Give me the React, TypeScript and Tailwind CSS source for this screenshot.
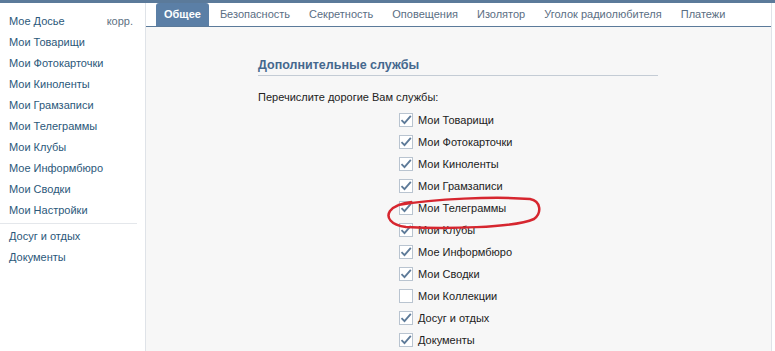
const menu = [
  "Мое Досье",
  "Мои Товарищи",
  "Мои Фотокарточки",
  "Мои Киноленты",
  "Мои Грамзаписи",
  "Мои Телеграммы",
  "Мои Клубы",
  "Мое Информбюро",
  "Мои Сводки",
  "Мои Настройки",
];

const tabs = [
  "Общее",
  "Безопасность",
  "Секретность",
  "Оповещения",
  "Изолятор",
  "Уголок радиолюбителя",
  "Платежи",
];

const services: [string, boolean][] = [
  ["Мои Товарищи", true],
  ["Мои Фотокарточки", true],
  ["Мои Киноленты", true],
  ["Мои Грамзаписи", true],
  ["Мои Телеграммы", true],
  ["Мои Клубы", true],
  ["Мое Информбюро", true],
  ["Мои Сводки", true],
  ["Мои Коллекции", false],
  ["Досуг и отдых", true],
  ["Документы", true],
];

function Check({ on }: { on: boolean }) {
  return (
    <span className="w-[14px] h-[14px] border border-[#b9c4d0] bg-white flex items-center justify-center shrink-0">
      {on && (
        <svg width="12" height="12" viewBox="0 0 12 12">
          <path d="M1.5 6.2 L4.5 9.2 L10.8 1.8" fill="none" stroke="#5d7a98" strokeWidth="1.8" />
        </svg>
      )}
    </span>
  );
}

export default function App() {
  return (
    <div className="w-[775px] h-[351px] overflow-hidden bg-white font-['Liberation_Sans','Arial',sans-serif] text-[11px]">
      <div className="h-[3px] bg-[#5b7a9a]" />
      <div className="flex h-[348px]">
        <div className="w-[145px] shrink-0 pt-[8px] text-[#2b587a]">
          {menu.map((m, i) => (
            <div key={m} className="h-[21px] flex items-center pl-[9px] pr-[12px] justify-between">
              <span>{m}</span>
              {i === 0 && <span className="text-[#5d7183]">корр.</span>}
            </div>
          ))}
          <div className="mr-[8px] my-[2px] border-t border-[#e4e7eb]" />
          <div className="h-[21px] flex items-center pl-[9px]">Досуг и отдых</div>
          <div className="h-[21px] flex items-center pl-[9px]">Документы</div>
        </div>
        <div className="w-[627px] shrink-0 border-l border-r border-[#dfe3e8] bg-[#f7f7f7] flex flex-col">
          <div className="h-[34px] bg-white border-b border-[#5b7a9a] flex items-end gap-[3px] pl-[10px] whitespace-nowrap">
            {tabs.map((t, i) =>
              i === 0 ? (
                <div key={t} className="h-[23px] px-[8px] flex items-center bg-[#5b7fa6] text-white font-bold rounded-t-[3px]">
                  {t}
                </div>
              ) : (
                <div key={t} className="h-[23px] px-[8px] flex items-center text-[#5a6e83]">
                  {t}
                </div>
              ),
            )}
          </div>
          <div className="pl-[112px] pt-[29px] relative">
            <div className="w-[400px] border-b border-[#c4ccd5] pb-[0px] font-bold text-[12.5px] text-[#45688e]">
              Дополнительные службы
            </div>
            <div className="mt-[13px] text-[#222]">Перечислите дорогие Вам службы:</div>
            <div className="mt-[4px] ml-[141px] flex flex-col text-[#222]">
              {services.map(([s, on]) => (
                <div key={s} className="h-[22px] flex items-center gap-[5px]">
                  <Check on={on} />
                  <span>{s}</span>
                </div>
              ))}
            </div>
            <svg className="absolute left-[238px] top-[168px]" width="160" height="36" viewBox="0 0 160 36">
              <path
                d="M14 10 C50 4 110 1 146 4 C157 6 158 18 150 24 C130 33 60 34 22 32 C6 30 2 22 6 16 C10 11 18 8 28 7"
                fill="none"
                stroke="#d6262f"
                strokeWidth="2.5"
              />
            </svg>
          </div>
        </div>
        <div className="flex-1 bg-white" />
      </div>
    </div>
  );
}
